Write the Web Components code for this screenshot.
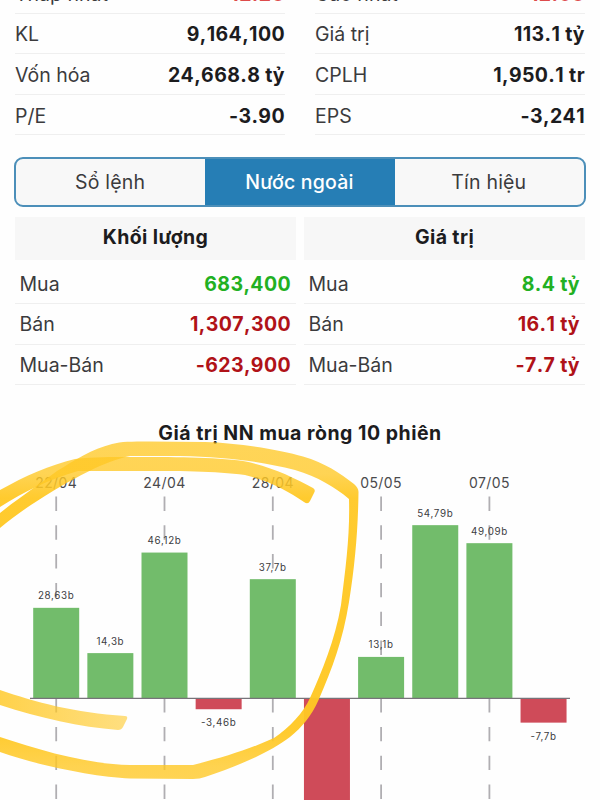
<!DOCTYPE html>
<html lang="vi">
<head>
<meta charset="utf-8">
<meta name="viewport" content="width=device-width, initial-scale=1">
<title>Nước ngoài</title>
<style>
  * { box-sizing: border-box; }
  body {
    margin: 0;
    height: 800px;
    overflow: hidden;
    background: #fefefe;
    color: #3b3b3d;
    font: 400 19.5px/24px Inter, "Noto Sans", sans-serif;
    --line: #efefef;
    --up: #22b022;
    --down: #b01218;
    --accent: #267eb5;
  }
  .page { display: flex; flex-direction: column; margin-top: -27px; }
  .stats { display: grid; grid-template-columns: 1fr 1fr; gap: 30px; padding: 0 15px; }
  s-tabs { margin: 22px 14px 0; }
  .foreign { display: grid; grid-template-columns: 1fr 1fr; gap: 8px; padding: 10px 15px 0; }
</style>
</head>
<body>
<div class="page">
  <div class="stats">
    <s-group>
      <s-row label="Thấp nhất" tone="low">12.20</s-row>
      <s-row label="KL">9,164,100</s-row>
      <s-row label="Vốn hóa">24,668.8 tỷ</s-row>
      <s-row label="P/E">-3.90</s-row>
    </s-group>
    <s-group>
      <s-row label="Cao nhất" tone="low">12.60</s-row>
      <s-row label="Giá trị">113.1 tỷ</s-row>
      <s-row label="CPLH">1,950.1 tr</s-row>
      <s-row label="EPS">-3,241</s-row>
    </s-group>
  </div>
  <s-tabs>
    <s-tab>Sổ lệnh</s-tab>
    <s-tab active>Nước ngoài</s-tab>
    <s-tab>Tín hiệu</s-tab>
  </s-tabs>
  <div class="foreign">
    <s-group heading="Khối lượng">
      <s-row inset label="Mua" tone="up">683,400</s-row>
      <s-row inset label="Bán" tone="down">1,307,300</s-row>
      <s-row inset label="Mua-Bán" tone="down">-623,900</s-row>
    </s-group>
    <s-group heading="Giá trị">
      <s-row inset label="Mua" tone="up">8.4 tỷ</s-row>
      <s-row inset label="Bán" tone="down">16.1 tỷ</s-row>
      <s-row inset label="Mua-Bán" tone="down">-7.7 tỷ</s-row>
    </s-group>
  </div>
  <s-chart heading="Giá trị NN mua ròng 10 phiên"></s-chart>
</div>

<script>
class SRow extends HTMLElement {
  constructor() {
    super();
    this.attachShadow({ mode: 'open' });
  }

  connectedCallback() {
    this.shadowRoot.innerHTML = `
      <style>
        :host {
          display: flex;
          justify-content: space-between;
          align-items: center;
          box-sizing: border-box;
          height: 40.6px;
          padding-top: 2px;
          border-bottom: 1px solid var(--line);
          white-space: nowrap;
        }
        :host([inset]) { padding: 1px 5px 0 4.5px; }
        :host([tone=low]) { padding-top: 3px; }
        .value { font-weight: 700; color: #1c1c1e; font-kerning: none; letter-spacing: .4px; }
        :host([tone=up]) .value { color: var(--up); }
        :host([tone=down]) .value { color: var(--down); }
        :host([tone=low]) .value { color: #dd4b4b; }
      </style>
      <span>${this.getAttribute('label') || ''}</span>
      <span class="value"><slot></slot></span>
    `;
  }
}
customElements.define('s-row', SRow);

class SGroup extends HTMLElement {
  constructor() {
    super();
    this.attachShadow({ mode: 'open' });
  }

  connectedCallback() {
    const heading = this.getAttribute('heading');
    this.shadowRoot.innerHTML = `
      <style>
        :host { display: flex; flex-direction: column; }
        header {
          height: 43px;
          margin-bottom: 3px;
          background: #f7f7f7;
          color: #1c1c1e;
          font-weight: 700;
          letter-spacing: .4px;
          line-height: 40px;
          text-align: center;
        }
      </style>
      ${heading ? `<header>${heading}</header>` : ''}
      <slot></slot>
    `;
  }
}
customElements.define('s-group', SGroup);

class STabs extends HTMLElement {
  constructor() {
    super();
    this.attachShadow({ mode: 'open' });
    this.shadowRoot.innerHTML = `
      <style>
        :host {
          display: grid;
          grid-template-columns: repeat(3, 1fr);
          box-sizing: border-box;
          height: 50px;
          border: 2px solid #4c8fb9;
          border-radius: 9px;
          overflow: hidden;
          background: #f8f8f8;
        }
      </style>
      <slot></slot>
    `;
  }
}
customElements.define('s-tabs', STabs);

class STab extends HTMLElement {
  constructor() {
    super();
    this.attachShadow({ mode: 'open' });
    this.shadowRoot.innerHTML = `
      <style>
        :host { display: flex; align-items: center; justify-content: center; padding-right: 1px; letter-spacing: .2px; }
        :host([active]) { background: var(--accent); color: #fff; font-weight: 500; }
      </style>
      <slot></slot>
    `;
  }
}
customElements.define('s-tab', STab);

// net buying per session, in billions; every other session has its date on top
const SESSIONS = [
  { date: '22/04', value: 28.63, text: '28,63b' },
  { value: 14.3, text: '14,3b' },
  { date: '24/04', value: 46.12, text: '46,12b' },
  { value: -3.46, text: '-3,46b' },
  { date: '28/04', value: 37.7, text: '37,7b' },
  { value: -60, text: '' },
  { date: '05/05', value: 13.1, text: '13,1b' },
  { value: 54.79, text: '54,79b' },
  { date: '07/05', value: 49.09, text: '49,09b' },
  { value: -7.7, text: '-7,7b' },
];

class SChart extends HTMLElement {
  constructor() {
    super();
    this.attachShadow({ mode: 'open' });
  }

  connectedCallback() {
    const zero = 298.3, scale = 3.16, step = 54.15, width = 46;
    const center = (i) => 56.2 + i * step;
    const grid = SESSIONS.map((s, i) => s.date ? `
      <line class="grid" x1="${center(i)}" x2="${center(i)}" y1="96.5" y2="400"/>` : '').join('');
    const dates = SESSIONS.map((s, i) => s.date ? `
      <text class="date" x="${center(i)}" y="88">${s.date}</text>` : '').join('');
    const bars = SESSIONS.map((s, i) => {
      const h = Math.abs(s.value) * scale;
      const up = s.value > 0;
      return `
      <rect class="${up ? 'up' : 'down'}" x="${center(i) - width / 2}" y="${up ? zero - h : zero}" width="${width}" height="${h}"/>
      <text class="value" x="${center(i)}" y="${up ? zero - h - 8.5 : zero + h + 17}">${s.text}</text>`;
    }).join('');

    this.shadowRoot.innerHTML = `
      <style>
        :host { display: block; margin-top: 15px; height: 400px; }
        svg { display: block; overflow: hidden; }
        text { text-anchor: middle; }
        .title { font-size: 19.5px; font-weight: 700; fill: #1c1c1e; letter-spacing: .5px; }
        .date { font-size: 14px; fill: #4a4a4c; letter-spacing: .4px; }
        .value { font-size: 9.8px; fill: #3c3c3e; letter-spacing: .65px; }
        .grid { stroke: #b0aeb2; stroke-width: 1.8; stroke-dasharray: 14.4 14.4; }
        .axis { stroke: #77737a; stroke-width: 1.2; }
        .up { fill: #72bc6b; }
        .down { fill: #cf4b59; }
        .marker path { fill: url(#ink); }
      </style>
      <svg width="600" height="400" viewBox="0 0 600 400">
        <defs>
          <!-- the pen is denser where the stroke gets thin -->
          <linearGradient id="ink" gradientUnits="userSpaceOnUse" x1="0" x2="0" y1="440" y2="780">
            <stop offset="0" stop-color="#ffc824" stop-opacity=".76"/>
            <stop offset=".1" stop-color="#ffc824" stop-opacity=".78"/>
            <stop offset=".17" stop-color="#ffc824" stop-opacity=".95"/>
            <stop offset=".72" stop-color="#ffc824" stop-opacity=".97"/>
            <stop offset=".86" stop-color="#ffc824" stop-opacity=".95"/>
            <stop offset=".96" stop-color="#ffc824" stop-opacity=".8"/>
            <stop offset="1" stop-color="#ffc824" stop-opacity=".78"/>
          </linearGradient>
          <linearGradient id="tail" gradientUnits="userSpaceOnUse" x1="0" x2="127" y1="0" y2="0">
            <stop offset="0" stop-color="#ffc824" stop-opacity=".82"/>
            <stop offset="1" stop-color="#ffc824" stop-opacity=".58"/>
          </linearGradient>
        </defs>
        <text class="title" x="300" y="39.5">${this.getAttribute('heading')}</text>
        ${grid}
        ${dates}
        ${bars}
        <line class="axis" x1="30" x2="570" y1="${zero}" y2="${zero}"/>
        <g class="marker" transform="translate(0 -400)">
          <path d="M0 490 C25 476 50 465 75 459 C95 457 110 457 130 457 C170 457 215 457 243 461 C270 466 293 477 313 488 Q316 490 314 493 L310 501 Q308 505 304 502 C288 491 270 481 245 475 C215 471 180 471 130 471 L78 471 C50 479 25 491 0 507 Z"/>
          <path d="M0 513 C20 497 40 484 57 471 C75 460 92 449 112 444 C122 441.5 130 441.5 150 441.5 L205 442 C240 443 280 450 303 456.5 C325 463 340 473 354 484 Q358.5 488 358.5 492 C358 530 355 565 349 602 C343 640 332 669 319 699 C311 717 302 727 290 737 C268 754 232 768 205 777 Q200 779 193 779 L130 778.5 C95 777 40 766 0 752 L0 737 C40 750 85 764 130 765 L193 765 C225 757 250 749 274 738 C289 728 304 712 310 698 C322 671 335 640 341 605 C346 565 350 535 349 499 C335 487 318 477 295 470 C260 461 225 457 180 456 L130 456 C105 461 75 478 53 491 C35 502 15 515 0 528 Z"/>
          <path style="fill: url(#tail)" d="M0 690 C35 702 75 713 125 716 Q128 716 127 719 L123 727 Q121.5 730 118 730 C80 727 40 718 0 705 Z"/>
        </g>
      </svg>
    `;
  }
}
customElements.define('s-chart', SChart);
</script>
</body>
</html>
